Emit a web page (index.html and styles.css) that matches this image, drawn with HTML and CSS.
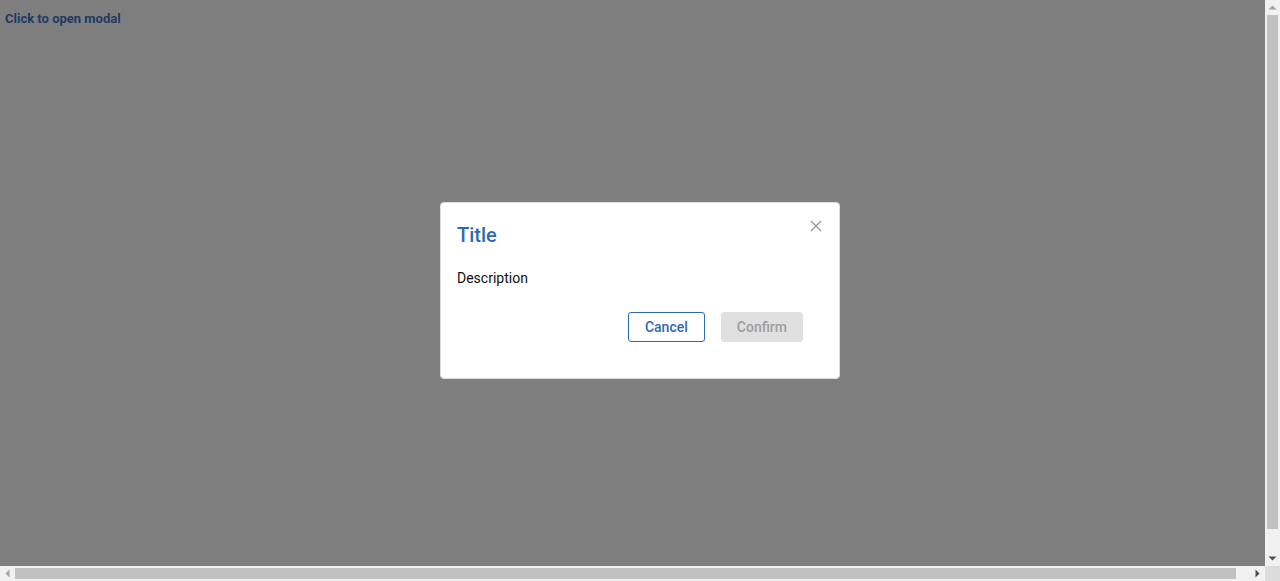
FILE: index.html
```html
<!DOCTYPE html>
<html lang="en">
<head>
<meta charset="utf-8">
<title>Modal</title>
<link rel="stylesheet" href="styles.css">
</head>
<body>
<main class="page">
  <a class="open-link" href="#">Click to open modal</a>
</main>
<div class="overlay">
  <div class="modal" role="dialog">
    <button class="close" aria-label="Close">
      <svg width="12" height="12" viewBox="0 0 12 12"><path d="M1 1L11 11M11 1L1 11" stroke="#9a9a9a" stroke-width="1.4" fill="none"/></svg>
    </button>
    <h2 class="modal-title">Title</h2>
    <p class="modal-desc">Description</p>
    <div class="modal-actions">
      <button class="btn btn-outline">Cancel</button>
      <button class="btn btn-disabled" disabled>Confirm</button>
    </div>
  </div>
</div>
<div class="scrollbars" aria-hidden="true">
  <div class="sb sb-v">
    <span class="sb-btn"><svg width="15" height="15" viewBox="0 0 15 15"><polygon points="3.5,9.5 7.5,5.5 11.5,9.5" fill="#a3a3a3"/></svg></span>
    <div class="sb-track sb-track-v"><div class="sb-thumb sb-thumb-v"></div></div>
    <span class="sb-btn"><svg width="15" height="15" viewBox="0 0 15 15"><polygon points="3.5,5.5 11.5,5.5 7.5,9.5" fill="#505050"/></svg></span>
  </div>
  <div class="sb sb-h">
    <span class="sb-btn"><svg width="15" height="15" viewBox="0 0 15 15"><polygon points="9.5,3.5 9.5,11.5 5.5,7.5" fill="#a3a3a3"/></svg></span>
    <div class="sb-track sb-track-h"><div class="sb-thumb sb-thumb-h"></div></div>
    <span class="sb-btn"><svg width="15" height="15" viewBox="0 0 15 15"><polygon points="5.5,3.5 9.5,7.5 5.5,11.5" fill="#505050"/></svg></span>
  </div>
  <div class="sb-corner"></div>
</div>
</body>
</html>
```

FILE: styles.css
```css
html, body {
  margin: 0;
  padding: 0;
  overflow: hidden;
}
body {
  font-family: Roboto, "Liberation Sans", Arial, sans-serif;
  background: #ffffff;
}
.page {
  display: block;
  height: 100vh;
  padding: 8px 5px 0;
  box-sizing: border-box;
}
.open-link {
  color: #3d76c8;
  font-size: 13px;
  font-weight: 700;
  text-decoration: none;
  line-height: 16px;
}
.overlay {
  position: fixed;
  top: 0;
  left: 0;
  width: 100vw;
  height: 100vh;
  background: rgba(0, 0, 0, 0.5);
  display: flex;
  align-items: center;
  justify-content: center;
}
.modal {
  position: relative;
  width: 400px;
  box-sizing: border-box;
  background: #fff;
  border: 1px solid #dedede;
  border-radius: 4px;
  padding: 20px 36px 36px 16px;
}
.close {
  position: absolute;
  top: 15px;
  right: 15px;
  width: 16px;
  height: 16px;
  padding: 0;
  border: 0;
  background: transparent;
  display: flex;
  align-items: center;
  justify-content: center;
}
.modal-title {
  margin: 0;
  font-size: 20px;
  font-weight: 500;
  line-height: 24px;
  color: #2f6ab0;
}
.modal-desc {
  margin: 22px 0 0;
  font-size: 14px;
  line-height: 18px;
  color: #111;
}
.modal-actions {
  display: flex;
  justify-content: flex-end;
  gap: 16px;
  margin-top: 25px;
}
.btn {
  font-family: Roboto, "Liberation Sans", Arial, sans-serif;
  font-size: 14px;
  font-weight: 500;
  height: 30px;
  border-radius: 3px;
  padding: 0 16px;
  box-sizing: border-box;
}
.btn-outline {
  background: #fff;
  border: 1px solid #2f6ab0;
  color: #2f6ab0;
}
.btn-disabled {
  padding: 0 15px;
  background: #e0e0e0;
  border: 1px solid #e0e0e0;
  color: #9e9e9e;
}

/* scrollbars drawn over the page */
.scrollbars {
  position: fixed;
  top: 0;
  left: 0;
  width: 100vw;
  height: 100vh;
  display: grid;
  grid-template-columns: 1fr 15px;
  grid-template-rows: 1fr 15px;
  pointer-events: none;
}
.sb {
  background: #f1f1f1;
  display: flex;
}
.sb-v {
  grid-column: 2;
  grid-row: 1;
  flex-direction: column;
}
.sb-h {
  grid-column: 1;
  grid-row: 2;
  flex-direction: row;
}
.sb-corner {
  grid-column: 2;
  grid-row: 2;
  background: #dcdcdc;
}
.sb-btn {
  flex: 0 0 15px;
  width: 15px;
  height: 15px;
  display: block;
}
.sb-btn svg {
  display: block;
}
.sb-track {
  flex: 1;
  display: flex;
}
.sb-track-v {
  flex-direction: column;
  padding: 0 2px;
}
.sb-track-h {
  flex-direction: row;
  padding: 2px 0;
}
.sb-thumb {
  background: #c1c1c1;
}
.sb-thumb-v {
  height: 95.9%;
}
.sb-thumb-h {
  width: 98.9%;
}
```
